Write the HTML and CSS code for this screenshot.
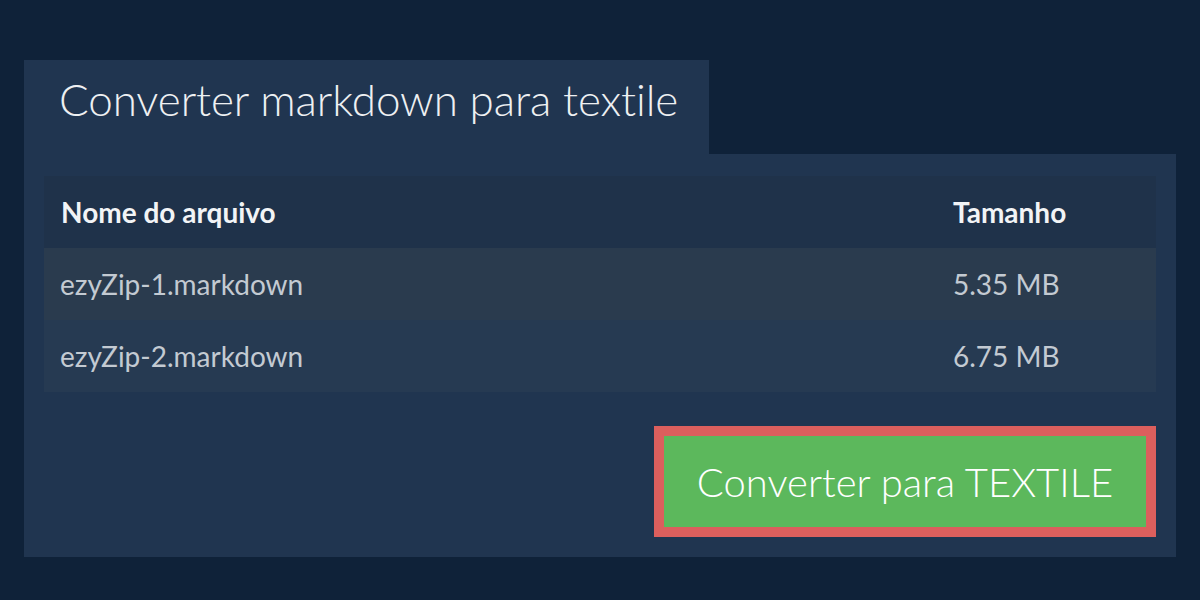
FILE: index.html
```html
<!DOCTYPE html>
<html lang="pt">
<head>
<meta charset="utf-8">
<title>Converter markdown para textile</title>
<link rel="stylesheet" href="styles.css">
</head>
<body>
<div class="page">
  <div class="panel">
    <div class="tab"><h1 class="title">Converter markdown para textile</h1></div>
    <div class="body">
      <table class="files">
        <thead>
          <tr><th class="name">Nome do arquivo</th><th class="size">Tamanho</th></tr>
        </thead>
        <tbody>
          <tr class="odd"><td class="name">ezyZip-1.markdown</td><td class="size">5.35 MB</td></tr>
          <tr class="even"><td class="name">ezyZip-2.markdown</td><td class="size">6.75 MB</td></tr>
        </tbody>
      </table>
      <div class="actions">
        <button class="convert">Converter para TEXTILE</button>
      </div>
    </div>
  </div>
</div>
</body>
</html>
```

FILE: styles.css
```css
html, body {
  margin: 0;
  padding: 0;
  background: #0f2239;
  font-family: Lato, "Noto Sans", sans-serif;
}
.page {
  width: 1200px;
  height: 600px;
  padding: 60px 24px 0;
  box-sizing: border-box;
}
.panel {
  display: flex;
  flex-direction: column;
  align-items: flex-start;
}
.tab {
  background: #203550;
  width: 685px;
  height: 94px;
  display: flex;
  align-items: center;
  padding-left: 35px;
  padding-bottom: 16px;
  box-sizing: border-box;
}
.title {
  margin: 0;
  font-weight: 300;
  font-size: 44px;
  color: #eef0f2;
  letter-spacing: -0.1px;
}
.body {
  background: #203550;
  width: 1152px;
  padding: 22px 20px 20px;
  box-sizing: border-box;
}
.files {
  width: 100%;
  border-collapse: collapse;
  font-size: 28px;
}
.files th {
  background: #1f324a;
  color: #f2f4f6;
  font-weight: 700;
  text-align: left;
  height: 72px;
  padding: 0 17px;
}
.files td {
  color: #c3cad2;
  height: 72px;
  padding: 0 16px;
}
.files .size {
  width: 186px;
  padding-left: 9px;
}
.odd { background: #2a3b4e; }
.even { background: #263a52; }
.actions {
  display: flex;
  justify-content: flex-end;
  margin-top: 34px;
}
.convert {
  background: #5cb85c;
  border: 10px solid #dc5f5d;
  color: #ffffff;
  font-family: Lato, "Noto Sans", sans-serif;
  font-weight: 300;
  font-size: 40px;
  width: 502px;
  height: 111px;
  padding: 0;
  cursor: pointer;
}
```
